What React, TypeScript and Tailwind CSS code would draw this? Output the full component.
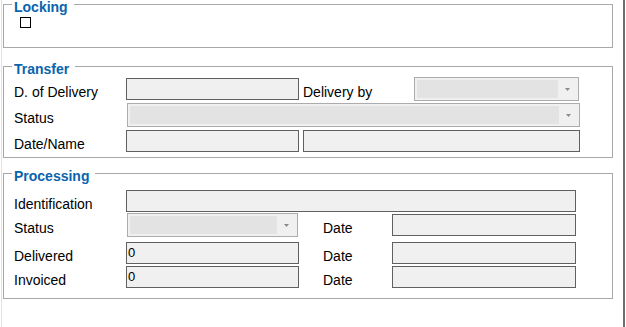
import React from 'react';

function Group({ title, className, children }: { title: string; className: string; children?: React.ReactNode }) {
  return (
    <div className={`relative ml-[1px] w-[610px] border border-[#a8a8a8] pl-[10px] ${className}`}>
      <span className="absolute left-[8px] top-[-6px] bg-white pl-[2px] pr-[6px] text-[14px] font-bold leading-[16px] text-[#0a64ad]">
        {title}
      </span>
      {children}
    </div>
  );
}

function Label({ text, width }: { text: string; width: string }) {
  return <span className={`${width} shrink-0 pt-[5px] text-[14px] leading-[16px] text-black`}>{text}</span>;
}

function TextBox({ width, value = '' }: { width: string; value?: string }) {
  return (
    <div className={`${width} h-[22px] shrink-0 border border-[#606060] bg-[#f0f0f0] pl-[1px] pt-[2px] text-[13px] leading-[16px] text-black`}>
      {value}
    </div>
  );
}

function DropDown({ width }: { width: string }) {
  return (
    <div className={`${width} flex h-[24px] shrink-0 border border-[#acacac] bg-[#f0f0f0] p-[2px]`}>
      <div className="flex-1 bg-[#e3e3e3]" />
      <div className="flex w-[18px] items-center justify-center">
        <svg width="5" height="3" viewBox="0 0 5 3">
          <path d="M0 0H5L2.5 3Z" fill="#8a8a8a" />
        </svg>
      </div>
    </div>
  );
}

export default function App() {
  return (
    <div className="flex h-[327px] w-[626px] bg-white pl-[1px] font-['Liberation_Sans',Arial,sans-serif]">
      <div className="flex h-full w-[624px] flex-col border-l border-r-2 border-l-[#e2e2e2] border-r-[#6e6e6e] pt-[4px]">
        <Group title="Locking" className="h-[44px] pl-[16px] pt-[12px]">
          <div className="h-[11px] w-[11px] border border-black bg-white" />
        </Group>

        <Group title="Transfer" className="mt-[18px] h-[92px] pt-[10px]">
          <div className="flex h-[24px] items-center">
            <Label text="D. of Delivery" width="w-[112px]" />
            <TextBox width="w-[173px]" />
            <span className="ml-[4px] w-[111px] shrink-0 pt-[5px] text-[14px] leading-[16px]">Delivery by</span>
            <DropDown width="w-[165px]" />
          </div>
          <div className="mt-[2px] flex h-[24px] items-center">
            <Label text="Status" width="w-[113px]" />
            <DropDown width="w-[453px]" />
          </div>
          <div className="mt-[3px] flex h-[22px] items-center">
            <Label text="Date/Name" width="w-[112px]" />
            <TextBox width="w-[173px]" />
            <div className="ml-[4px]">
              <TextBox width="w-[277px]" />
            </div>
          </div>
        </Group>

        <Group title="Processing" className="mt-[15px] h-[126px] pt-[16px]">
          <div className="flex h-[22px] items-center">
            <Label text="Identification" width="w-[112px]" />
            <TextBox width="w-[450px]" />
          </div>
          <div className="mt-[1px] flex h-[24px] items-center">
            <Label text="Status" width="w-[113px]" />
            <DropDown width="w-[171px]" />
            <span className="ml-[25px] w-[69px] shrink-0 pt-[5px] text-[14px] leading-[16px]">Date</span>
            <TextBox width="w-[184px]" />
          </div>
          <div className="mt-[5px] flex h-[22px] items-center">
            <Label text="Delivered" width="w-[112px]" />
            <TextBox width="w-[173px]" value="0" />
            <span className="ml-[24px] w-[69px] shrink-0 pt-[5px] text-[14px] leading-[16px]">Date</span>
            <TextBox width="w-[184px]" />
          </div>
          <div className="mt-[2px] flex h-[22px] items-center">
            <Label text="Invoiced" width="w-[112px]" />
            <TextBox width="w-[173px]" value="0" />
            <span className="ml-[24px] w-[69px] shrink-0 pt-[5px] text-[14px] leading-[16px]">Date</span>
            <TextBox width="w-[184px]" />
          </div>
        </Group>
      </div>
    </div>
  );
}
